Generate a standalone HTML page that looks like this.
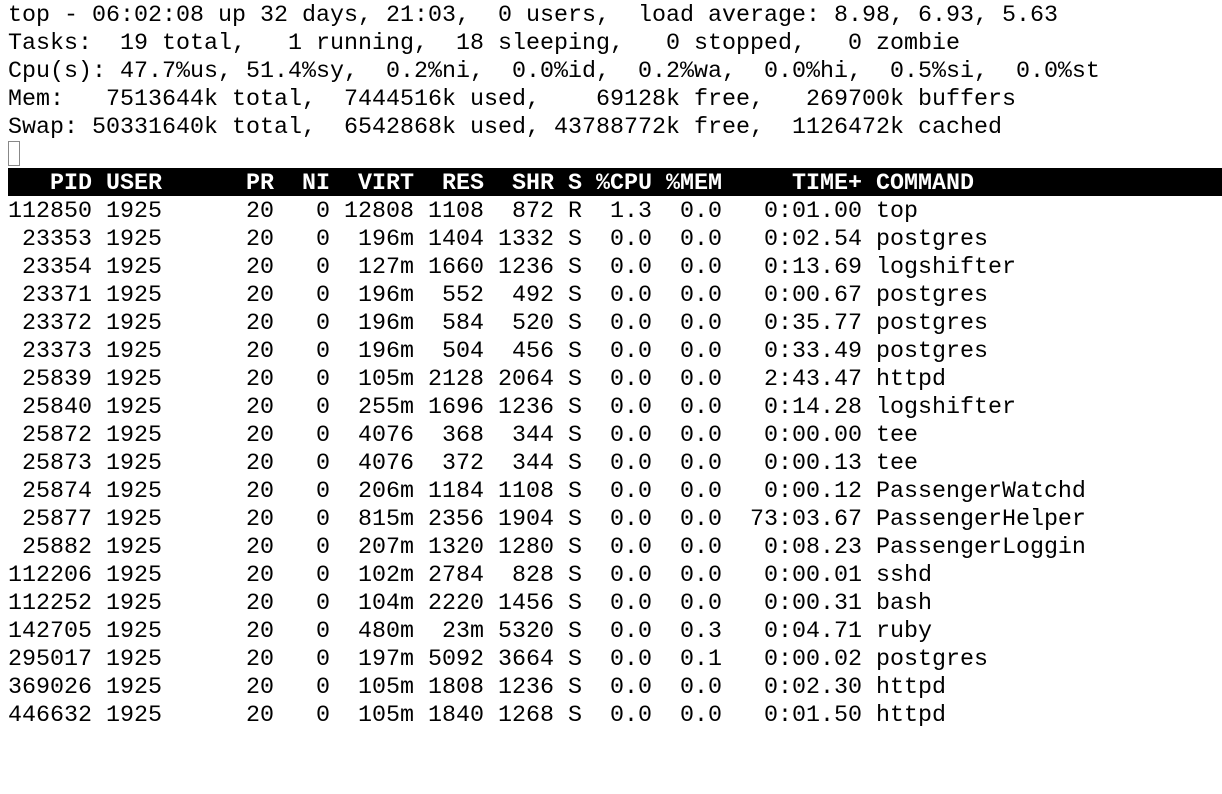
<!DOCTYPE html>
<html><head><meta charset="utf-8"><style>
html,body{margin:0;padding:0;background:#fff;width:1222px;height:794px;overflow:hidden}
pre{margin:0;position:absolute;left:8px;top:2px;font-family:"Liberation Mono","DejaVu Sans Mono",monospace;font-size:23.33px;line-height:28px;color:#000;letter-spacing:0}
.hdr{position:absolute;left:8px;top:168px;width:1214px;height:28px;background:#000}
.hdr pre{left:0;top:2px;color:#fff;font-weight:bold}
.cur{position:absolute;left:8px;top:141px;width:12px;height:25px;border:1px solid #888;box-sizing:border-box}
</style></head><body>
<pre>top - 06:02:08 up 32 days, 21:03,  0 users,  load average: 8.98, 6.93, 5.63
Tasks:  19 total,   1 running,  18 sleeping,   0 stopped,   0 zombie
Cpu(s): 47.7%us, 51.4%sy,  0.2%ni,  0.0%id,  0.2%wa,  0.0%hi,  0.5%si,  0.0%st
Mem:   7513644k total,  7444516k used,    69128k free,   269700k buffers
Swap: 50331640k total,  6542868k used, 43788772k free,  1126472k cached


112850 1925      20   0 12808 1108  872 R  1.3  0.0   0:01.00 top
 23353 1925      20   0  196m 1404 1332 S  0.0  0.0   0:02.54 postgres
 23354 1925      20   0  127m 1660 1236 S  0.0  0.0   0:13.69 logshifter
 23371 1925      20   0  196m  552  492 S  0.0  0.0   0:00.67 postgres
 23372 1925      20   0  196m  584  520 S  0.0  0.0   0:35.77 postgres
 23373 1925      20   0  196m  504  456 S  0.0  0.0   0:33.49 postgres
 25839 1925      20   0  105m 2128 2064 S  0.0  0.0   2:43.47 httpd
 25840 1925      20   0  255m 1696 1236 S  0.0  0.0   0:14.28 logshifter
 25872 1925      20   0  4076  368  344 S  0.0  0.0   0:00.00 tee
 25873 1925      20   0  4076  372  344 S  0.0  0.0   0:00.13 tee
 25874 1925      20   0  206m 1184 1108 S  0.0  0.0   0:00.12 PassengerWatchd
 25877 1925      20   0  815m 2356 1904 S  0.0  0.0  73:03.67 PassengerHelper
 25882 1925      20   0  207m 1320 1280 S  0.0  0.0   0:08.23 PassengerLoggin
112206 1925      20   0  102m 2784  828 S  0.0  0.0   0:00.01 sshd
112252 1925      20   0  104m 2220 1456 S  0.0  0.0   0:00.31 bash
142705 1925      20   0  480m  23m 5320 S  0.0  0.3   0:04.71 ruby
295017 1925      20   0  197m 5092 3664 S  0.0  0.1   0:00.02 postgres
369026 1925      20   0  105m 1808 1236 S  0.0  0.0   0:02.30 httpd
446632 1925      20   0  105m 1840 1268 S  0.0  0.0   0:01.50 httpd</pre>
<div class="cur"></div>
<div class="hdr"><pre>   PID USER      PR  NI  VIRT  RES  SHR S %CPU %MEM     TIME+ COMMAND</pre></div>
</body></html>
